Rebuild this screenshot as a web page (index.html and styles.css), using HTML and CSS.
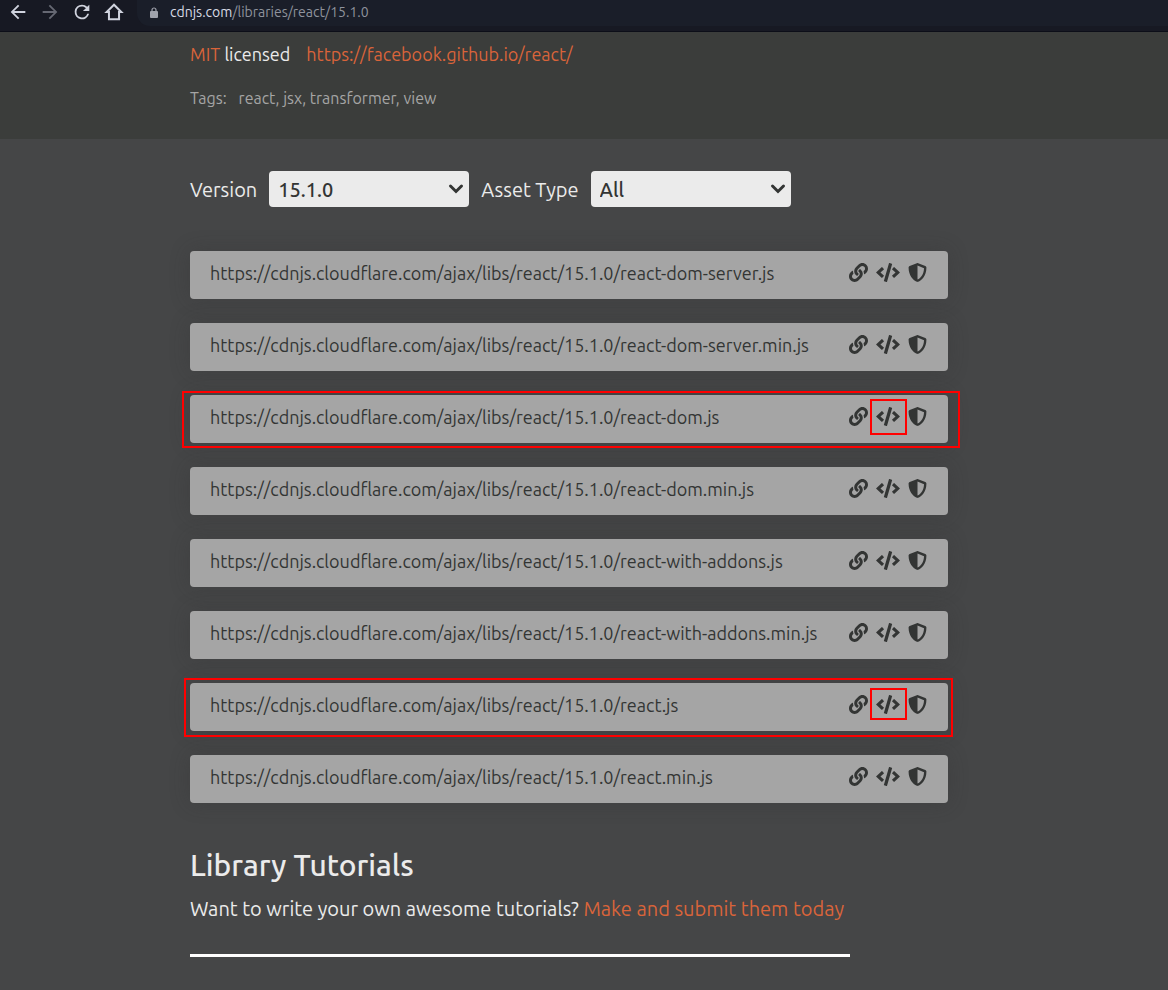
FILE: index.html
```
<!DOCTYPE html>
<html lang="en">
<head>
<meta charset="utf-8">
<meta name="viewport" content="width=device-width, initial-scale=1">
<title>react - Libraries - cdnjs</title>
<link rel="stylesheet" href="styles.css">
</head>
<body>
<svg class="sprite" aria-hidden="true">
  <symbol id="link" viewBox="0 0 512 512"><path d="M326.612 185.391c59.747 59.809 58.927 155.698.36 214.59-.11.12-.24.25-.36.37l-67.2 67.2c-59.27 59.27-155.699 59.262-214.96 0-59.27-59.26-59.27-155.7 0-214.96l37.106-37.106c9.84-9.84 26.786-3.3 27.294 10.606.648 17.722 3.826 35.527 9.69 52.721 1.986 5.822.567 12.262-3.783 16.612l-13.087 13.087c-28.026 28.026-28.905 73.66-1.155 101.96 28.024 28.579 74.086 28.749 102.325.51l67.2-67.19c28.191-28.191 28.073-73.757 0-101.83-3.701-3.694-7.429-6.564-10.341-8.569a16.037 16.037 0 0 1-6.947-12.606c-.396-10.567 3.348-21.456 11.698-29.806l21.054-21.055c5.521-5.521 14.182-6.199 20.584-1.731a152.482 152.482 0 0 1 20.522 17.197zM467.547 44.449c-59.261-59.262-155.69-59.27-214.96 0l-67.2 67.2c-.12.12-.25.25-.36.37-58.566 58.892-59.387 154.781.36 214.59a152.454 152.454 0 0 0 20.521 17.196c6.402 4.468 15.064 3.789 20.584-1.731l21.054-21.055c8.35-8.35 12.094-19.239 11.698-29.806a16.037 16.037 0 0 0-6.947-12.606c-2.912-2.005-6.64-4.875-10.341-8.569-28.073-28.073-28.191-73.639 0-101.83l67.2-67.19c28.239-28.239 74.3-28.069 102.325.51 27.75 28.3 26.872 73.934-1.155 101.96l-13.087 13.087c-4.35 4.35-5.769 10.79-3.783 16.612 5.864 17.194 9.042 34.999 9.69 52.721.509 13.906 17.454 20.446 27.294 10.606l37.106-37.106c59.271-59.259 59.271-155.699.001-214.959z"/></symbol>
  <symbol id="code" viewBox="0 0 640 512"><path d="M278.9 511.5l-61-17.7c-6.4-1.8-10-8.5-8.2-14.9L346.2 8.7c1.8-6.4 8.5-10 14.9-8.2l61 17.7c6.4 1.8 10 8.5 8.2 14.9L293.8 503.3c-1.9 6.4-8.5 10.1-14.9 8.2zm-114-112.2l43.5-46.4c4.6-4.9 4.3-12.7-.8-17.2L117 256l90.6-79.7c5.1-4.5 5.5-12.3.8-17.2l-43.5-46.4c-4.5-4.8-12.1-5.1-17-.5L3.8 247.2c-5.1 4.7-5.1 12.8 0 17.5l144.1 135.1c4.9 4.6 12.5 4.4 17-.5zm327.2.6l144.1-135.1c5.1-4.7 5.1-12.8 0-17.5L492.1 112.1c-4.8-4.5-12.4-4.3-17 .5L431.6 159c-4.6 4.9-4.3 12.7.8 17.2L523 256l-90.6 79.7c-5.1 4.5-5.5 12.3-.8 17.2l43.5 46.4c4.5 4.9 12.1 5.1 17 .6z"/></symbol>
  <symbol id="shield" viewBox="0 0 512 512"><path d="M466.5 83.7l-192-80a48.15 48.15 0 0 0-36.9 0l-192 80C27.7 91.1 16 108.6 16 128c0 198.5 114.5 335.7 221.5 380.3 11.8 4.9 25.1 4.9 36.9 0C360.1 472.6 496 349.3 496 128c0-19.4-11.7-36.9-29.5-44.3zM256.1 446.3l-.1-381 175.9 73.3c-3.3 151.4-82.1 261.1-175.8 307.7z"/></symbol>
  <symbol id="chevron" viewBox="0 0 16 12"><path d="M2.500 3 8 8.500 13.500 3" fill="none" stroke="currentColor" stroke-width="3" stroke-linecap="round"/></symbol>
</svg>

<header class="toolbar">
  <nav class="nav" aria-label="Browser">
    <button class="nav-button" aria-label="Back"><svg viewBox="0 0 24 24"><path d="M20 11H7.830l5.590-5.590L12 4l-8 8 8 8 1.410-1.410L7.830 13H20z"/></svg></button>
    <button class="nav-button nav-button-off" aria-label="Forward"><svg viewBox="0 0 24 24"><path d="M4 11h12.170l-5.590-5.590L12 4l8 8-8 8-1.410-1.410L16.170 13H4z"/></svg></button>
    <button class="nav-button" aria-label="Reload"><svg viewBox="0 0 24 24"><path d="M17.650 6.350A7.960 7.960 0 0 0 12 4a8 8 0 1 0 7.730 10h-2.080A6 6 0 1 1 12 6c1.660 0 3.140.690 4.220 1.780L13 11h7V4z"/></svg></button>
    <button class="nav-button" aria-label="Home"><svg viewBox="0 0 24 24"><path d="M12 4 4 12h2.500v8h11v-8H20z" fill="none" stroke="currentColor" stroke-width="2.200"/></svg></button>
  </nav>
  <div class="address">
    <svg class="lock" viewBox="0 0 8 11"><path d="M2 5V3a2 2 0 0 1 4 0v2" fill="none" stroke="currentColor" stroke-width="1.200"/><rect y="4" width="8" height="7" rx="1"/></svg>
    <span><span class="host">cdnjs.com</span>/libraries/react/15.1.0</span>
  </div>
</header>

<section class="about">
  <p class="license"><span><a href="#">MIT</a> licensed</span><a href="#">https://facebook.github.io/react/</a></p>
  <p class="tags"><span>Tags:</span><span>react, jsx, transformer, view</span></p>
</section>

<main class="content">
  <form class="filters">
    <label for="version">Version</label>
    <div class="picker"><select id="version"><option>15.1.0</option></select><svg><use href="#chevron"/></svg></div>
    <label for="asset">Asset Type</label>
    <div class="picker"><select id="asset"><option>All</option></select><svg><use href="#chevron"/></svg></div>
  </form>

  <ul class="assets">
    <li class="asset"><span class="url">https://cdnjs.cloudflare.com/ajax/libs/react/15.1.0/react-dom-server.js</span><div class="actions"><button class="action" aria-label="Copy URL"><svg><use href="#link"/></svg></button><button class="action action-wide" aria-label="Copy script tag"><svg><use href="#code"/></svg></button><button class="action" aria-label="Copy SRI hash"><svg><use href="#shield"/></svg></button></div></li>
    <li class="asset"><span class="url">https://cdnjs.cloudflare.com/ajax/libs/react/15.1.0/react-dom-server.min.js</span><div class="actions"><button class="action" aria-label="Copy URL"><svg><use href="#link"/></svg></button><button class="action action-wide" aria-label="Copy script tag"><svg><use href="#code"/></svg></button><button class="action" aria-label="Copy SRI hash"><svg><use href="#shield"/></svg></button></div></li>
    <li class="asset asset-marked-wide"><span class="url">https://cdnjs.cloudflare.com/ajax/libs/react/15.1.0/react-dom.js</span><div class="actions"><button class="action" aria-label="Copy URL"><svg><use href="#link"/></svg></button><button class="action action-wide" aria-label="Copy script tag"><svg><use href="#code"/></svg></button><button class="action" aria-label="Copy SRI hash"><svg><use href="#shield"/></svg></button></div></li>
    <li class="asset"><span class="url">https://cdnjs.cloudflare.com/ajax/libs/react/15.1.0/react-dom.min.js</span><div class="actions"><button class="action" aria-label="Copy URL"><svg><use href="#link"/></svg></button><button class="action action-wide" aria-label="Copy script tag"><svg><use href="#code"/></svg></button><button class="action" aria-label="Copy SRI hash"><svg><use href="#shield"/></svg></button></div></li>
    <li class="asset"><span class="url">https://cdnjs.cloudflare.com/ajax/libs/react/15.1.0/react-with-addons.js</span><div class="actions"><button class="action" aria-label="Copy URL"><svg><use href="#link"/></svg></button><button class="action action-wide" aria-label="Copy script tag"><svg><use href="#code"/></svg></button><button class="action" aria-label="Copy SRI hash"><svg><use href="#shield"/></svg></button></div></li>
    <li class="asset"><span class="url">https://cdnjs.cloudflare.com/ajax/libs/react/15.1.0/react-with-addons.min.js</span><div class="actions"><button class="action" aria-label="Copy URL"><svg><use href="#link"/></svg></button><button class="action action-wide" aria-label="Copy script tag"><svg><use href="#code"/></svg></button><button class="action" aria-label="Copy SRI hash"><svg><use href="#shield"/></svg></button></div></li>
    <li class="asset asset-marked"><span class="url">https://cdnjs.cloudflare.com/ajax/libs/react/15.1.0/react.js</span><div class="actions"><button class="action" aria-label="Copy URL"><svg><use href="#link"/></svg></button><button class="action action-wide" aria-label="Copy script tag"><svg><use href="#code"/></svg></button><button class="action" aria-label="Copy SRI hash"><svg><use href="#shield"/></svg></button></div></li>
    <li class="asset"><span class="url">https://cdnjs.cloudflare.com/ajax/libs/react/15.1.0/react.min.js</span><div class="actions"><button class="action" aria-label="Copy URL"><svg><use href="#link"/></svg></button><button class="action action-wide" aria-label="Copy script tag"><svg><use href="#code"/></svg></button><button class="action" aria-label="Copy SRI hash"><svg><use href="#shield"/></svg></button></div></li>
  </ul>

  <section class="tutorials">
    <h2>Library Tutorials</h2>
    <p>Want to write your own awesome tutorials? <a href="#">Make and submit them today</a></p>
  </section>
</main>
</body>
</html>
```
FILE: styles.css
```
* { box-sizing: border-box; }

body {
  margin: 0;
  min-height: 100vh;
  background: #454647;
  color: #ebebeb;
  font-family: Ubuntu, "Noto Sans", sans-serif;
}

p, h2, ul { margin: 0; padding: 0; }
a { color: #d9643a; text-decoration: none; }
button { padding: 0; border: 0; background: none; color: inherit; }
svg { display: block; fill: currentColor; }
.sprite { position: absolute; width: 0; height: 0; }

.toolbar {
  display: flex;
  height: 32px;
  padding-left: 7px;
  gap: 12px;
  background: #171923;
  border-bottom: 1px solid #0c0e18;
  color: #d0d3de;
}
.nav { display: flex; gap: 10px; height: 24px; align-items: center; }
.nav-button, .nav-button svg { width: 22px; height: 22px; }
.nav-button-off { color: #666873; }
.address {
  flex: 1;
  display: flex;
  align-items: center;
  gap: 12px;
  height: 26px;
  padding: 0 13px 2px;
  background: #1a1e29;
  border-radius: 0 0 0 13px;
  color: #8f939d;
  font-size: 14px;
}
.lock { width: 8px; height: 11px; color: #a0a3ac; }
.host { color: #d8dbe5; }

.about {
  padding: 10px 20px 29px 190px;
  background: #3b3d3b;
}
.license { display: flex; gap: 16px; font-size: 18px; line-height: 24px; }
.tags { display: flex; gap: 12px; margin-top: 20px; font-size: 16px; line-height: 24px; color: #a5a5a5; }

.content { padding: 32px 20px 32px 190px; }
.filters { display: flex; align-items: center; gap: 12px; font-size: 20px; }
.picker { position: relative; width: 200px; }
.picker select {
  appearance: none;
  width: 100%;
  height: 36px;
  padding: 0 28px 0 9px;
  border: 0;
  border-radius: 4px;
  background: #ebebeb;
  color: #333534;
  font: 500 20px Ubuntu, "Noto Sans", sans-serif;
}
.picker svg {
  position: absolute;
  right: 5px;
  top: 12px;
  width: 16px;
  height: 12px;
  color: #333534;
  pointer-events: none;
}

.assets { display: grid; gap: 24px; max-width: 758px; margin-top: 44px; list-style: none; }
.asset {
  position: relative;
  display: flex;
  justify-content: space-between;
  height: 48px;
  padding: 0 21px 0 20px;
  border-radius: 4px;
  background: #a5a5a5;
  box-shadow: 0 0 20px rgba(50, 50, 50, 0.3);
  color: #333534;
}
.url { font-size: 18px; line-height: 44px; white-space: nowrap; }
.actions { display: flex; align-items: center; height: 42px; gap: 8px; }
.action { position: relative; width: 19px; height: 19px; }
.action-wide { width: 24px; }
.action svg { width: 100%; height: 100%; }

/* Red annotation frames */
.asset-marked::after, .asset-marked-wide::after,
.asset-marked .action-wide::after, .asset-marked-wide .action-wide::after {
  content: "";
  position: absolute;
  border: 2px solid #f00;
  pointer-events: none;
}
.asset-marked::after { inset: -5px -5px -6px -6px; }
.asset-marked-wide::after { inset: -4px -12px -5px -8px; }
.asset-marked .action-wide::after { inset: -7px -7px -6px -6px; }
.asset-marked-wide .action-wide::after { inset: -8px -7px -9px -6px; }

.tutorials { max-width: 660px; margin-top: 40px; padding-bottom: 31px; border-bottom: 3px solid #fff; }
.tutorials h2 { font-size: 30px; font-weight: 500; line-height: 44px; }
.tutorials p { margin-top: 8px; font-size: 20px; line-height: 28px; }
```
